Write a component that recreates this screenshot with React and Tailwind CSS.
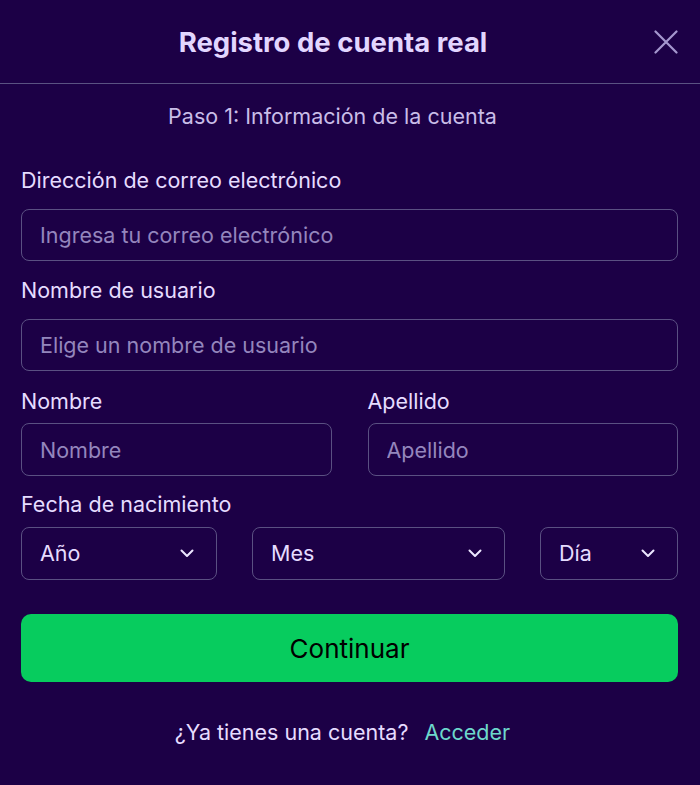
import React from "react";

function Chevron() {
  return (
    <svg width="14" height="9" viewBox="0 0 14 9" fill="none" className="shrink-0">
      <path d="M1.5 1.5L7 7L12.5 1.5" stroke="#ece6ff" strokeWidth="2" strokeLinecap="round" strokeLinejoin="round" />
    </svg>
  );
}

function Field({ label, placeholder, className = "" }) {
  return (
    <div className={"flex flex-col " + className}>
      <label className="text-[21.5px] leading-[24px] text-[#e6dcff]">{label}</label>
      <input
        placeholder={placeholder}
        className="mt-[17px] h-[52px] w-full rounded-[8px] border-[1.5px] border-[#5a5082] bg-transparent px-[18px] text-[21.5px] text-[#e6dcff] placeholder:text-[#9486bd] outline-none"
      />
    </div>
  );
}

function Select({ label, className = "" }) {
  return (
    <div
      className={
        "flex h-[53px] items-center justify-between rounded-[8px] border-[1.5px] border-[#5a5082] pl-[18px] pr-[22px] text-[21.5px] text-[#e6dcff] " +
        className
      }
    >
      <span>{label}</span>
      <Chevron />
    </div>
  );
}

export default function App() {
  return (
    <div className="min-h-[785px] w-full bg-[#1c0046] font-['Inter',sans-serif]">
      <div className="flex h-[84px] items-center gap-[9px] border-b border-[#5a5282] pl-[21px] pr-[22px]">
        <h1 className="flex-1 text-center text-[27.5px] font-bold leading-[32px] text-[#e2d6ff]">
          Registro de cuenta real
        </h1>
        <button className="flex h-[24px] w-[24px] items-center justify-center" aria-label="Cerrar">
          <svg width="24" height="24" viewBox="0 0 24 24" fill="none">
            <path d="M1.5 1.5L22.5 22.5M22.5 1.5L1.5 22.5" stroke="#a597cf" strokeWidth="2.2" strokeLinecap="round" />
          </svg>
        </button>
      </div>

      <div className="flex flex-col pl-[21px] pr-[22px]">
        <p className="mt-[18px] pr-[34px] text-center text-[21.5px] leading-[28px] text-[#c9bde8]">
          Paso 1: Información de la cuenta
        </p>

        <Field className="mt-[38px]" label="Dirección de correo electrónico" placeholder="Ingresa tu correo electrónico" />
        <Field className="mt-[17px]" label="Nombre de usuario" placeholder="Elige un nombre de usuario" />

        <div className="mt-[18px] flex gap-[36px]">
          <div className="flex flex-1 flex-col">
            <label className="text-[21.5px] leading-[24px] text-[#e6dcff]">Nombre</label>
            <input
              placeholder="Nombre"
              className="mt-[10px] h-[53px] w-full rounded-[8px] border-[1.5px] border-[#5a5082] bg-transparent px-[18px] text-[21.5px] text-[#e6dcff] placeholder:text-[#9486bd] outline-none"
            />
          </div>
          <div className="flex flex-1 flex-col">
            <label className="text-[21.5px] leading-[24px] text-[#e6dcff]">Apellido</label>
            <input
              placeholder="Apellido"
              className="mt-[10px] h-[53px] w-full rounded-[8px] border-[1.5px] border-[#5a5082] bg-transparent px-[18px] text-[21.5px] text-[#e6dcff] placeholder:text-[#9486bd] outline-none"
            />
          </div>
        </div>

        <label className="mt-[16px] text-[21.5px] leading-[24px] text-[#e6dcff]">Fecha de nacimiento</label>
        <div className="mt-[11px] flex gap-[35px]">
          <Select label="Año" className="w-[196px]" />
          <Select label="Mes" className="flex-1" />
          <Select label="Día" className="w-[138px]" />
        </div>

        <button className="mt-[34px] h-[68px] w-full rounded-[10px] bg-[#07cc5e] text-[26px] text-black">
          Continuar
        </button>

        <div className="mt-[36px] flex items-center justify-center gap-[16px] pr-[14px] text-[21.5px] leading-[28px]">
          <span className="text-[#e6dcff]">¿Ya tienes una cuenta?</span>
          <a className="text-[#6dd8cc]">Acceder</a>
        </div>
      </div>
    </div>
  );
}
